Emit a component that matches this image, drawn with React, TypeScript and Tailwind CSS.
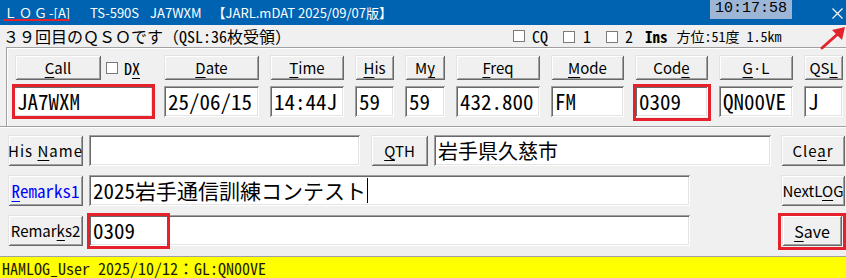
import React from 'react';

// Classic Win32 3D edges, drawn as inset shadows so they take no layout room.
const RAISED =
	'bg-[#f0f0f0] shadow-[inset_1px_1px_0_#e3e3e3,inset_-1px_-1px_0_#696969,inset_2px_2px_0_#ffffff,inset_-2px_-2px_0_#a0a0a0]';
const SUNKEN =
	'bg-white shadow-[inset_1px_1px_0_#a0a0a0,inset_-1px_-1px_0_#ffffff,inset_2px_2px_0_#696969,inset_-2px_-2px_0_#e3e3e3]';
const MONO = "font-['Noto_Sans_Mono_CJK_JP','Liberation_Mono','Noto_Sans_CJK_JP',monospace]";
const UI = "font-['Noto_Sans_CJK_JP','Noto_Sans',sans-serif]";

function Btn({ children, className = '' }: { children: React.ReactNode; className?: string }) {
	return (
		<div className={`flex items-center justify-center text-[15px] leading-none text-black ${UI} ${RAISED} ${className}`}>
			<span className="whitespace-pre">{children}</span>
		</div>
	);
}

function U({ children }: { children: React.ReactNode }) {
	return <span className="underline decoration-1 underline-offset-[3px]">{children}</span>;
}

function Field({ value = '', caret = false, className = '' }: { value?: string; caret?: boolean; className?: string }) {
	return (
		<div className={`flex items-center pl-[4px] text-[21px] leading-none text-black ${MONO} ${SUNKEN} ${className}`}>
			<span className="whitespace-pre">{value}</span>
			{caret && <span className="ml-[1px] w-[1px] h-[25px] bg-black" />}
		</div>
	);
}

// red annotation frame laid over a control
function RedBox({ className }: { className: string }) {
	return <div className={`absolute border-[3px] border-[#e5222b] pointer-events-none ${className}`} />;
}

function Check() {
	return <span className="inline-block w-[12px] h-[12px] bg-white border border-[#7a7a7a]" />;
}

const COLS: { label: React.ReactNode; value: string; w: string }[] = [
	{ label: <><U>C</U>all</>, value: 'JA7WXM', w: 'w-[140px]' },
	{ label: <><U>D</U>ate</>, value: '25/06/15', w: 'w-[95px]' },
	{ label: <><U>T</U>ime</>, value: '14:44J', w: 'w-[74px]' },
	{ label: <><U>H</U>is</>, value: '59', w: 'w-[39px]' },
	{ label: <>M<U>y</U></>, value: '59', w: 'w-[40px]' },
	{ label: <><U>F</U>req</>, value: '432.800', w: 'w-[84px]' },
	{ label: <><U>M</U>ode</>, value: 'FM', w: 'w-[73px]' },
	{ label: <>Cod<U>e</U></>, value: '0309', w: 'w-[73px]' },
	{ label: <><U>G</U>·L</>, value: 'QN00VE', w: 'w-[74px]' },
	{ label: <>QS<U>L</U></>, value: 'J', w: 'w-[39px]' },
];

export default function App() {
	return (
		<div className="relative w-[846px] h-[278px] overflow-hidden bg-[#f0f0f0] flex flex-col">
			{/* title bar */}
			<div className={`h-[25px] bg-[#0063b1] text-white flex items-center text-[13px] whitespace-nowrap ${UI}`}>
				<div className="relative shrink-0 ml-[4px] w-[64px] h-full flex items-center">
					<span className="tracking-[2px] text-[13px]">ＬＯＧ</span>
					<span className="text-[13px]">-[A]</span>
					<div className="absolute left-[-1px] right-[-1px] bottom-[4px] h-[2px] bg-[#e5222b]" />
				</div>
				<span className="ml-[22px]">TS-590S</span>
				<span className="ml-[11px]">JA7WXM</span>
				<span className="ml-[11px]">【JARL.mDAT 2025/09/07版】</span>
				<div className="ml-auto self-start h-[19px] w-[82px] bg-[#9db6d6] text-black flex items-center justify-center text-[15px] font-['Liberation_Mono',monospace]">
					10:17:58
				</div>
				<svg className="ml-[40px] mr-[3px] mt-[2px]" width="11" height="11" viewBox="0 0 11 11">
					<path d="M0.5 0.5 L10.5 10.5 M10.5 0.5 L0.5 10.5" stroke="#fff" strokeWidth="1.1" />
				</svg>
			</div>

			{/* info line */}
			<div className={`h-[22px] flex items-center text-black whitespace-nowrap ${MONO}`}>
				<span className="ml-[3px] w-[510px] text-[16px] leading-none">３９回目のＱＳＯです（QSL:36枚受領）</span>
				<Check />
				<span className="ml-[7px] text-[16px] leading-none">CQ</span>
				<span className="ml-[15px]"><Check /></span>
				<span className="ml-[8px] text-[16px] leading-none">1</span>
				<span className="ml-[15px]"><Check /></span>
				<span className="ml-[7px] text-[16px] leading-none">2</span>
				<span className="ml-[12px] text-[15px] font-bold leading-none">Ins</span>
				<span className="ml-[9px] text-[14px] leading-none">方位:51度 1.5km</span>
			</div>

			{/* QSO group */}
			<div className="ml-[6px] h-[79px] border-t border-l border-[#a0a0a0] shadow-[inset_1px_1px_0_#ffffff] pt-[7px] pl-[6px]">
				<div className="flex gap-x-[11px]">
					{COLS.map((c, i) => (
						<div key={i} className={`${c.w} flex flex-col gap-y-[6px]`}>
							{i === 0 ? (
								<div className="flex items-center h-[25px]">
									<Btn className="w-[86px] h-[25px] ml-[2px]">{c.label}</Btn>
									<span className="ml-[5px]"><Check /></span>
									<span className={`ml-[6px] text-[16px] leading-none ${MONO}`}>D<U>X</U></span>
								</div>
							) : (
								<Btn className="h-[25px]">{c.label}</Btn>
							)}
							<div className="relative">
								<Field value={c.value} className="h-[31px]" />
								{i === 0 && <RedBox className="-left-[1px] -right-[2px] -top-[2px] -bottom-[2px]" />}
								{i === 7 && <RedBox className="-left-[2px] -right-[3px] -top-[2px] -bottom-[4px]" />}
							</div>
						</div>
					))}
				</div>
			</div>
			<div className="h-[2px] border-t border-[#a0a0a0] border-b border-b-white" />

			{/* lower form */}
			<div className="flex flex-col gap-y-[9px] pt-[7px] pl-[8px]">
				<div className="flex items-center h-[31px]">
					<Btn className="w-[75px] h-[31px] tracking-[1px]">His <U>N</U>ame</Btn>
					<Field className="ml-[6px] w-[271px] h-[31px]" />
					<Btn className="ml-[11px] w-[57px] h-[31px]"><U>Q</U>TH</Btn>
					<Field value="岩手県久慈市" className="ml-[6px] w-[337px] h-[31px] !text-[20px]" />
					<Btn className="ml-[10px] w-[64px] h-[31px] tracking-[1px]">Cle<U>a</U>r</Btn>
				</div>
				<div className="flex items-center h-[31px]">
					<Btn className={`w-[75px] h-[31px] !text-[17px] !text-[#0000ff] ${MONO}`}><U>R</U>emarks1</Btn>
					<Field className="ml-[6px] w-[601px] h-[31px]" value="2025岩手通信訓練コンテスト" caret />
					<Btn className="ml-[91px] w-[64px] h-[31px]">NextL<U>O</U>G</Btn>
				</div>
				<div className="flex items-center h-[31px]">
					<Btn className="w-[75px] h-[31px]">Remar<U>k</U>s2</Btn>
					<div className="relative ml-[6px]">
						<Field value="0309" className="w-[601px] h-[31px]" />
						<RedBox className="-left-[2px] -top-[2px] w-[83px] h-[36px]" />
					</div>
					<div className="relative ml-[92px]">
						<Btn className="w-[60px] h-[31px] !text-[16px]"><U>S</U>ave</Btn>
						<RedBox className="-left-[4px] -right-[4px] -top-[2px] -bottom-[4px]" />
					</div>
				</div>
			</div>

			{/* status bar */}
			<div className={`mt-auto h-[22px] border-t border-[#a0a0a0] bg-[#ffff00] flex items-center pl-[2px] text-[16px] leading-none text-[#1a1a00] whitespace-nowrap ${MONO}`}>
				HAMLOG_User 2025/10/12：GL:QN00VE
			</div>

			{/* red annotation arrow pointing at the close button */}
			<svg className="absolute left-[818px] top-[26px]" width="28" height="26" viewBox="0 0 28 26">
				<path d="M4 22 L22 6" stroke="#e5222b" strokeWidth="3" strokeLinecap="round" />
				<path d="M14 4 L27 1 L24 14 Z" fill="#e5222b" />
			</svg>
		</div>
	);
}
